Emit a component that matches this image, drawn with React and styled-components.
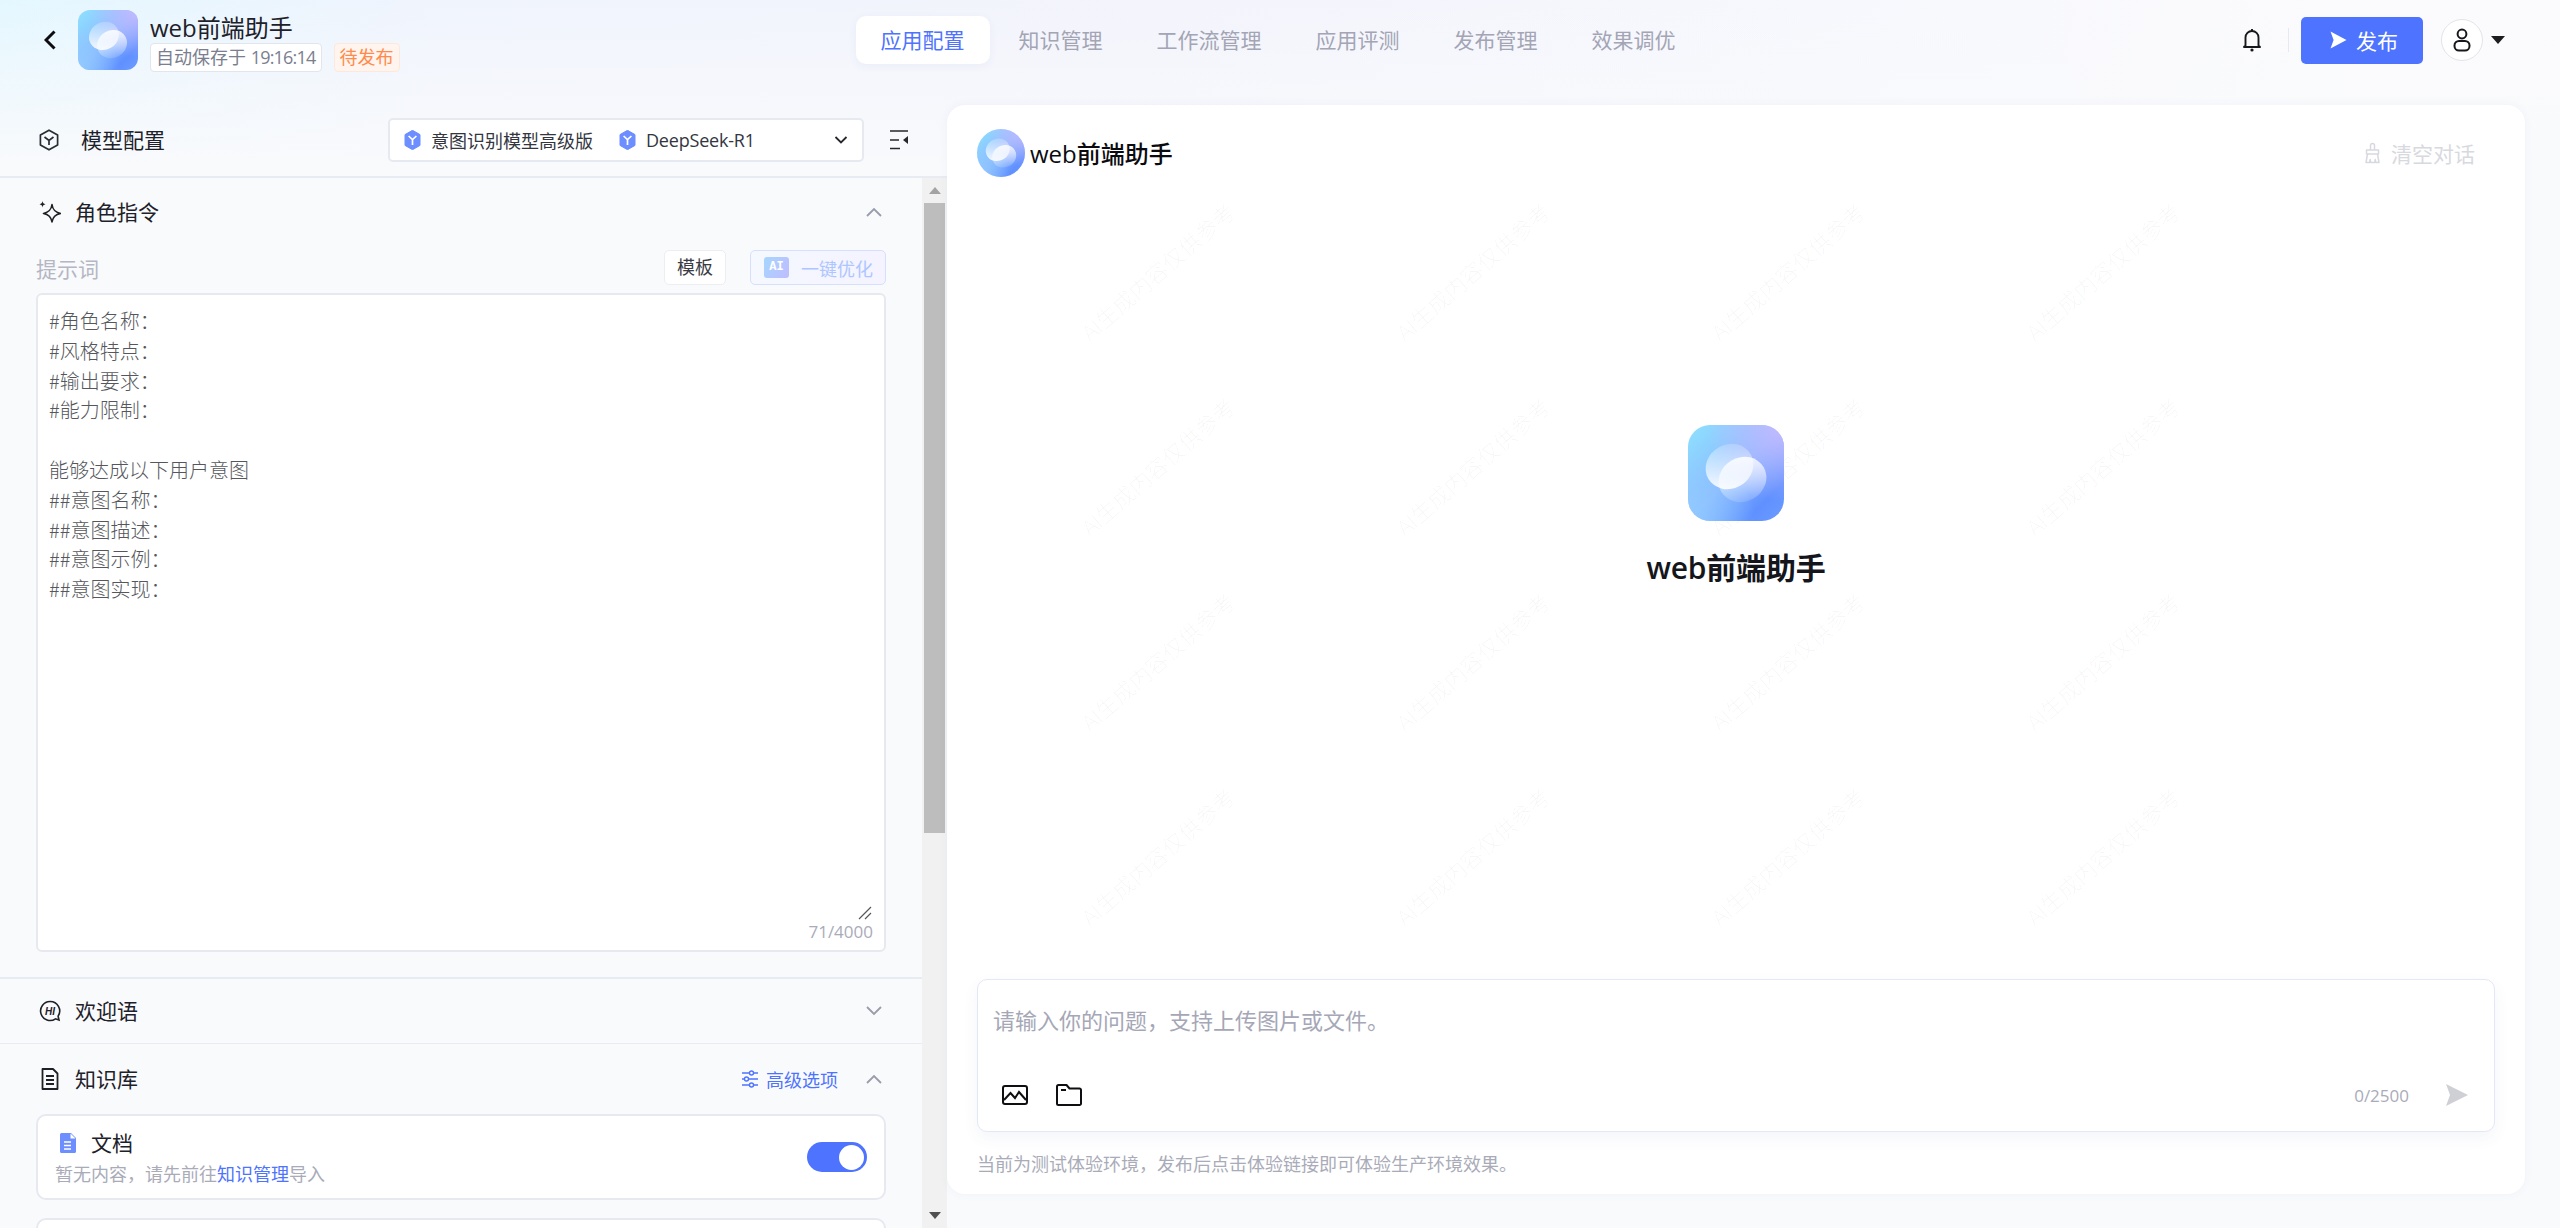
import React from "react";
import styled, { createGlobalStyle } from "styled-components";

const Global = createGlobalStyle`
  html, body { margin: 0; padding: 0; }
  body {
    font-family: "Open Sans", "Noto Sans CJK SC", sans-serif;
    color: #1d2129;
    background: #f9fafc;
  }
  * { box-sizing: border-box; }
`;

const Page = styled.div`
  width: 2560px;
  height: 1228px;
  overflow: hidden;
  display: flex;
  flex-direction: column;
  background:
    linear-gradient(to bottom, rgba(249, 250, 252, 0) 0, rgba(249, 250, 252, 0.55) 90px, #f9fafc 170px),
    linear-gradient(100deg, #e4f7ff 0%, #f0f4fd 16%, #f3f4fc 42%, #f7f8fd 66%, #fbfbfd 85%);
`;

const Header = styled.header`
  height: 105px;
  flex: none;
  display: flex;
  align-items: flex-start;
  padding: 0 55px 0 44px;
`;

const BackIcon = styled.svg`
  width: 12px;
  height: 20px;
  margin-top: 30px;
  flex: none;
`;

const Brand = styled.div`
  display: flex;
  align-items: flex-start;
  gap: 12px;
  margin-left: 22px;
  padding-top: 10px;
`;

const LogoSvg = styled.svg`
  display: block;
  flex: none;
  width: ${(p) => p.$size}px;
  height: ${(p) => p.$size}px;
  border-radius: ${(p) => p.$radius};
`;

const BrandText = styled.div`
  display: flex;
  flex-direction: column;
  margin-top: 3px;
`;

const AppName = styled.div`
  font-size: 24px;
  line-height: 30px;
  color: #1d2129;
  white-space: nowrap;
`;

const TagRow = styled.div`
  display: flex;
  gap: 12px;
`;

const Tag = styled.span`
  height: 29px;
  padding: 0 5px;
  font-size: 18px;
  line-height: 27px;
  border-radius: 4px;
  white-space: nowrap;
  border: 1px solid ${(p) => (p.$warn ? "#fde9dc" : "#e3e5ec")};
  background: ${(p) => (p.$warn ? "#fff5ee" : "#ffffff")};
  color: ${(p) => (p.$warn ? "#ff8a4c" : "#7b7e8f")};
`;

const TimeText = styled.span`
  letter-spacing: -0.8px;
`;

const Tabs = styled.nav`
  display: flex;
  gap: 4px;
  margin-left: 456px;
  margin-top: 16px;
`;

const Tab = styled.div`
  height: 48px;
  padding: 0 25px;
  font-size: 21px;
  line-height: 48px;
  border-radius: 10px;
  white-space: nowrap;
  color: ${(p) => (p.$active ? "#4d73ff" : "#a3a5b5")};
  background: ${(p) => (p.$active ? "#ffffff" : "transparent")};
  box-shadow: ${(p) => (p.$active ? "0 2px 8px rgba(70, 90, 160, 0.06)" : "none")};
`;

const Actions = styled.div`
  margin-left: auto;
  margin-top: 16px;
  height: 48px;
  display: flex;
  align-items: center;
`;

const BellIcon = styled.svg`
  width: 20px;
  height: 24px;
  flex: none;
`;

const VDivider = styled.span`
  width: 1px;
  height: 24px;
  background: #e8e9ef;
  margin: 0 12px 0 26px;
`;

const PublishButton = styled.button`
  width: 122px;
  height: 47px;
  border: 0;
  border-radius: 5px;
  background: #4d73ff;
  color: #fff;
  font: inherit;
  font-size: 21px;
  display: flex;
  align-items: center;
  padding-left: 29px;
  gap: 9px;
`;

const Glyph = styled.svg`
  width: ${(p) => p.$w}px;
  height: ${(p) => p.$h}px;
  flex: none;
`;

const Avatar = styled.div`
  width: 42px;
  height: 42px;
  margin-left: 18px;
  border-radius: 50%;
  background: #fff;
  border: 1px solid #e3e4ea;
  display: flex;
  align-items: center;
  justify-content: center;
`;

const Caret = styled.span`
  width: 0;
  height: 0;
  margin-left: 8px;
  border-left: 7px solid transparent;
  border-right: 7px solid transparent;
  border-top: 8px solid #1d1d1f;
`;

const Main = styled.main`
  flex: 1;
  min-height: 0;
  display: flex;
  align-items: flex-start;
`;

const LeftPanel = styled.section`
  width: 947px;
  height: 1123px;
  flex: none;
  display: flex;
  flex-direction: column;
`;

const ModelBar = styled.div`
  height: 73px;
  flex: none;
  display: flex;
  align-items: center;
  padding: 0 39px 2px 39px;
  border-bottom: 2px solid #e9ebf3;
`;

const BarTitle = styled.span`
  font-size: 21px;
  line-height: 30px;
  color: #1d2129;
  margin-left: 22px;
`;

const ModelSelect = styled.div`
  width: 476px;
  height: 44px;
  margin-left: auto;
  display: flex;
  align-items: center;
  background: #fff;
  border: 2px solid #e7e9f0;
  border-radius: 5px;
  padding: 0 14px;
  font-size: 18px;
  color: #33363f;
  white-space: nowrap;
`;

const ModelName = styled.span`
  margin-left: 10px;
  margin-right: ${(p) => p.$gap || 0}px;
  letter-spacing: ${(p) => (p.$gap ? "0" : "-0.2px")};
`;

const SelectChevron = styled.svg`
  width: 14px;
  height: 10px;
  margin-left: auto;
  flex: none;
`;

const CollapseIcon = styled.svg`
  width: 18px;
  height: 20px;
  margin-left: 26px;
  flex: none;
`;

const ScrollArea = styled.div`
  flex: 1;
  min-height: 0;
  display: flex;
`;

const Content = styled.div`
  flex: 1;
  min-width: 0;
  overflow: hidden;
`;

const ScrollTrack = styled.div`
  width: 25px;
  flex: none;
  display: flex;
  flex-direction: column;
  background: #f1f1f1;
`;

const ScrollBtn = styled.div`
  height: 25px;
  flex: none;
  display: flex;
  align-items: center;
  justify-content: center;
  margin-top: ${(p) => (p.$down ? "auto" : "0")};
`;

const Arrow = styled.span`
  width: 0;
  height: 0;
  border-left: 6px solid transparent;
  border-right: 6px solid transparent;
  ${(p) =>
    p.$down
      ? "border-top: 7px solid #505050;"
      : "border-bottom: 7px solid #a3a3a3;"}
`;

const Thumb = styled.div`
  height: 630px;
  margin: 0 2px;
  background: #bdbdbd;
`;

const SectionRow = styled.div`
  height: ${(p) => p.$h}px;
  display: flex;
  align-items: center;
  padding: 0 40px 0 39px;
  border-top: ${(p) => p.$top || "0 solid transparent"};
  border-bottom: ${(p) => p.$line || "0 solid transparent"};
`;

const IconBox = styled.svg`
  width: 22px;
  height: 22px;
  flex: none;
`;

const SectionTitle = styled.span`
  font-size: 21px;
  line-height: 30px;
  color: #1d2129;
  margin-left: 14px;
`;

const Chevron = styled.svg`
  width: 16px;
  height: 10px;
  flex: none;
  margin-left: ${(p) => p.$ml || "auto"};
`;

const AdvancedLink = styled.span`
  margin-left: auto;
  display: flex;
  align-items: center;
  gap: 8px;
  font-size: 18px;
  color: #4d73ff;
`;

const PromptBar = styled.div`
  height: 35px;
  margin: 4px 36px 0;
  display: flex;
  align-items: center;
  gap: 24px;
`;

const PromptLabel = styled.span`
  font-size: 21px;
  color: #b4b6c3;
  margin-right: auto;
`;

const TemplateBtn = styled.span`
  width: 62px;
  height: 35px;
  background: #fff;
  border: 1px solid #eceef3;
  border-radius: 5px;
  font-size: 18px;
  line-height: 33px;
  text-align: center;
  color: #3a3c45;
`;

const OptimizeBtn = styled.span`
  width: 136px;
  height: 35px;
  border: 1px solid #d6e0fc;
  border-radius: 5px;
  background: linear-gradient(90deg, #f5f8ff, #f4f3ff);
  display: flex;
  align-items: center;
  padding-left: 13px;
  gap: 12px;
  font-size: 18px;
  color: #aec6ff;
`;

const AiBadge = styled.span`
  width: 25px;
  height: 21px;
  border-radius: 3px;
  background: linear-gradient(120deg, #a5d6ff, #c0bcff);
  color: #fff;
  font-family: "Liberation Mono", monospace;
  font-weight: 700;
  font-size: 12px;
  line-height: 21px;
  text-align: center;
`;

const PromptBox = styled.div`
  position: relative;
  height: 659px;
  margin: 8px 36px 25px;
  background: #fff;
  border: 2px solid #e8e9f0;
  border-radius: 6px;
  padding: 11px 11px;
  font-family: "Noto Sans CJK SC", monospace;
  font-size: 20px;
  font-weight: 300;
  line-height: 29.8px;
  color: #55575c;
  white-space: pre;
`;

const ResizeGrip = styled.svg`
  position: absolute;
  right: 12px;
  bottom: 30px;
  width: 14px;
  height: 14px;
`;

const CharCount = styled.span`
  position: absolute;
  right: 11px;
  bottom: 8px;
  font-family: "Open Sans", sans-serif;
  font-size: 17px;
  font-weight: 400;
  line-height: 20px;
  color: #a9abb8;
`;

const KnowledgeCard = styled.div`
  height: ${(p) => p.$h}px;
  margin: 0 36px ${(p) => p.$mb}px;
  background: #fff;
  border: 2px solid #e8e9f0;
  border-radius: 10px;
  padding: 0 17px 0 17px;
  display: flex;
  align-items: center;
  justify-content: space-between;
`;

const CardText = styled.div`
  display: flex;
  flex-direction: column;
  gap: 4px;
`;

const CardHead = styled.div`
  display: flex;
  align-items: center;
  gap: 15px;
  padding-left: 5px;
  font-size: 21px;
  line-height: 30px;
  color: #1d2129;
`;

const CardHint = styled.div`
  font-size: 18px;
  line-height: 24px;
  color: #a9abb8;
`;

const HintLink = styled.span`
  color: #4d73ff;
`;

const Switch = styled.span`
  width: 60px;
  height: 30px;
  border-radius: 15px;
  background: #4d73ff;
  display: flex;
  align-items: center;
  justify-content: flex-end;
  padding-right: 3px;
`;

const Knob = styled.span`
  width: 25px;
  height: 25px;
  border-radius: 50%;
  background: #fff;
`;

const ChatCard = styled.section`
  position: relative;
  width: 1578px;
  height: 1089px;
  flex: none;
  background: #fff;
  border-radius: 18px;
  box-shadow: 0 0 10px rgba(60, 70, 130, 0.05);
  display: flex;
  flex-direction: column;
  overflow: hidden;
`;

const Watermarks = styled.div`
  position: absolute;
  left: 52px;
  top: 68px;
  display: grid;
  grid-template-columns: repeat(4, 315px);
  grid-auto-rows: 195px;
  pointer-events: none;
`;

const Watermark = styled.span`
  display: flex;
  align-items: center;
  justify-content: center;
  white-space: nowrap;
  font-size: 22px;
  font-weight: 300;
  color: rgba(20, 20, 40, 0.045);
  transform: rotate(-41deg);
`;

const ChatHeader = styled.div`
  position: relative;
  display: flex;
  align-items: center;
  padding: 24px 50px 0 30px;
`;

const ChatName = styled.span`
  font-size: 24px;
  font-weight: 500;
  color: #0b0b0f;
  margin: 0 0 2px 5px;
`;

const ClearBtn = styled.span`
  margin-left: auto;
  display: flex;
  align-items: center;
  gap: 10px;
  font-size: 21px;
  color: #d8d9e0;
`;

const Hero = styled.div`
  position: relative;
  margin-top: 248px;
  display: flex;
  flex-direction: column;
  align-items: center;
`;

const HeroName = styled.div`
  margin-top: 25px;
  font-size: 30px;
  line-height: 44px;
  font-weight: 600;
  letter-spacing: -0.2px;
  color: #14161c;
`;

const InputBox = styled.div`
  position: relative;
  margin: auto 30px 0;
  height: 153px;
  border: 1.5px solid #e3e8f6;
  border-radius: 10px;
  background: #fff;
  box-shadow: 0 6px 16px rgba(70, 90, 160, 0.06);
  padding: 25px 15px 16px;
  display: flex;
  flex-direction: column;
  justify-content: space-between;
`;

const Placeholder = styled.div`
  font-size: 22px;
  line-height: 30px;
  color: #a5a7b6;
`;

const InputTools = styled.div`
  height: 40px;
  display: flex;
  align-items: center;
  padding: 0 10px 0 9px;
`;

const ToolIcon = styled.svg`
  width: 26px;
  height: 22px;
  margin-right: 28px;
  flex: none;
`;

const Counter = styled.span`
  margin-left: auto;
  margin-right: 36px;
  font-size: 17px;
  color: #a9abb8;
`;

const Note = styled.div`
  position: relative;
  margin: 20px 30px 18px;
  font-size: 18px;
  line-height: 24px;
  color: #a9abb8;
`;

const Logo = ({ size, radius }) => (
  <LogoSvg $size={size} $radius={radius} viewBox="0 0 96 96" aria-hidden="true">
    <defs>
      <linearGradient id="lgBase" x1="0" y1="0" x2="1" y2="1">
        <stop offset="0" stopColor="#8fe2ff" />
        <stop offset="0.5" stopColor="#8ab9ff" />
        <stop offset="0.8" stopColor="#5f90ff" />
        <stop offset="1" stopColor="#6c9cff" />
      </linearGradient>
      <radialGradient id="lgTop" cx="1" cy="0" r="0.8">
        <stop offset="0" stopColor="#c8b9ff" stopOpacity="0.95" />
        <stop offset="1" stopColor="#c8b9ff" stopOpacity="0" />
      </radialGradient>
      <radialGradient id="lgBot" cx="0" cy="1" r="0.7">
        <stop offset="0" stopColor="#93ccff" stopOpacity="0.9" />
        <stop offset="1" stopColor="#93ccff" stopOpacity="0" />
      </radialGradient>
      <linearGradient id="lgE1" x1="0.9" y1="0" x2="0.2" y2="1">
        <stop offset="0" stopColor="#fff" stopOpacity="0.12" />
        <stop offset="1" stopColor="#fff" stopOpacity="0.95" />
      </linearGradient>
      <linearGradient id="lgE2" x1="0.8" y1="0" x2="0.3" y2="1">
        <stop offset="0" stopColor="#fff" stopOpacity="0.92" />
        <stop offset="1" stopColor="#fff" stopOpacity="0.12" />
      </linearGradient>
    </defs>
    <rect width="96" height="96" fill="url(#lgBase)" />
    <rect width="96" height="96" fill="url(#lgTop)" />
    <rect width="96" height="96" fill="url(#lgBot)" />
    <ellipse cx="41.5" cy="41.5" rx="24.5" ry="22" transform="rotate(-30 41.5 41.5)" fill="url(#lgE1)" />
    <ellipse cx="54.5" cy="54.5" rx="24.5" ry="22" transform="rotate(-30 54.5 54.5)" fill="url(#lgE2)" />
  </LogoSvg>
);

const HexFill = () => (
  <Glyph $w={17} $h={20} viewBox="0 0 17 20" aria-hidden="true">
    <path d="M8.5 0.3 16 4.6v10.8l-7.5 4.3L1 15.4V4.6z" fill="#6c8eff" stroke="#6c8eff" strokeLinejoin="round" />
    <path d="M4.6 6 8.5 9.6 12.4 6M8.5 9.6v5.4" fill="none" stroke="#fff" strokeWidth="1.7" />
  </Glyph>
);

const Up = () => (
  <Chevron viewBox="0 0 16 10" aria-hidden="true">
    <path d="M1 9 8 2l7 7" fill="none" stroke="#9a9cab" strokeWidth="1.8" />
  </Chevron>
);

const Down = () => (
  <Chevron viewBox="0 0 16 10" aria-hidden="true">
    <path d="M1 1l7 7 7-7" fill="none" stroke="#9a9cab" strokeWidth="1.8" />
  </Chevron>
);

const prompt = `#角色名称：
#风格特点：
#输出要求：
#能力限制：

能够达成以下用户意图
##意图名称：
##意图描述：
##意图示例：
##意图实现：`;

const tabs = ["应用配置", "知识管理", "工作流管理", "应用评测", "发布管理", "效果调优"];

export default function App() {
  return (
    <Page>
      <Global />
      <Header>
        <BackIcon viewBox="0 0 12 20" aria-hidden="true">
          <path d="M10.5 1.5 2 10l8.5 8.5" fill="none" stroke="#0d0d0f" strokeWidth="3" />
        </BackIcon>
        <Brand>
          <Logo size={60} radius="12px" />
          <BrandText>
            <AppName>web前端助手</AppName>
            <TagRow>
              <Tag>自动保存于 <TimeText>19:16:14</TimeText></Tag>
              <Tag $warn>待发布</Tag>
            </TagRow>
          </BrandText>
        </Brand>
        <Tabs>
          {tabs.map((t, i) => (
            <Tab key={t} $active={i === 0}>{t}</Tab>
          ))}
        </Tabs>
        <Actions>
          <BellIcon viewBox="0 0 20 24" aria-hidden="true">
            <path d="M3.5 17.5V9.5a6.5 6.5 0 0 1 13 0v8l1.5 1.5H2z" fill="none" stroke="#17181c" strokeWidth="1.9" strokeLinejoin="round" />
            <path d="M10 3V1" stroke="#17181c" strokeWidth="1.9" />
            <circle cx="10" cy="22" r="1.6" fill="#17181c" />
          </BellIcon>
          <VDivider />
          <PublishButton>
            <Glyph $w={17} $h={18} viewBox="0 0 17 18" aria-hidden="true">
              <path d="M0.5 0.5 16.5 9 0.5 17.5 3.6 9z" fill="#fff" />
            </Glyph>
            发布
          </PublishButton>
          <Avatar>
            <svg width="18" height="24" viewBox="0 0 18 24" aria-hidden="true">
              <circle cx="9" cy="6" r="4.4" fill="none" stroke="#17181c" strokeWidth="2" />
              <rect x="1.5" y="13" width="15" height="9.5" rx="4.5" fill="none" stroke="#17181c" strokeWidth="2" />
            </svg>
          </Avatar>
          <Caret />
        </Actions>
      </Header>
      <Main>
        <LeftPanel>
          <ModelBar>
            <Glyph $w={20} $h={22} viewBox="0 0 20 22" aria-hidden="true">
              <path d="M10 1.2 18.6 6v10L10 20.8 1.4 16V6z" fill="none" stroke="#2a2c33" strokeWidth="1.7" strokeLinejoin="round" />
              <path d="M5.5 8 10 11.5 14.5 8M10 11.5V16" fill="none" stroke="#2a2c33" strokeWidth="1.7" />
            </Glyph>
            <BarTitle>模型配置</BarTitle>
            <ModelSelect>
              <HexFill />
              <ModelName $gap={26}>意图识别模型高级版</ModelName>
              <HexFill />
              <ModelName>DeepSeek-R1</ModelName>
              <SelectChevron viewBox="0 0 14 10" aria-hidden="true">
                <path d="M1.5 2 7 7.5 12.5 2" fill="none" stroke="#26272d" strokeWidth="1.8" />
              </SelectChevron>
            </ModelSelect>
            <CollapseIcon viewBox="0 0 18 20" aria-hidden="true">
              <path d="M0 1h18M0 10h9M0 18.5h10" stroke="#26272d" strokeWidth="1.6" fill="none" />
              <path d="M13 10 18 6v8z" fill="#26272d" />
            </CollapseIcon>
          </ModelBar>
          <ScrollArea>
            <Content>
              <SectionRow $h={68}>
                <IconBox viewBox="0 0 22 22" aria-hidden="true">
                  <path d="M13 3.5c.8 5.5 3 7.8 8.5 9-5.5 1-7.7 3.3-8.500 8.500-.8-5.200-3-7.500-8.500-8.500 5.500-1.200 7.700-3.500 8.500-9z" fill="none" stroke="#1f2025" strokeWidth="1.6" strokeLinejoin="round" />
                  <path d="M3.5 0c.3 2 1 2.8 3 3.200-2 .4-2.700 1.200-3 3.200-.3-2-1-2.800-3-3.200 2-.4 2.700-1.200 3-3.200z" fill="#1f2025" />
                </IconBox>
                <SectionTitle>角色指令</SectionTitle>
                <Up />
              </SectionRow>
              <PromptBar>
                <PromptLabel>提示词</PromptLabel>
                <TemplateBtn>模板</TemplateBtn>
                <OptimizeBtn>
                  <AiBadge>AI</AiBadge>
                  一键优化
                </OptimizeBtn>
              </PromptBar>
              <PromptBox>
                {prompt}
                <ResizeGrip viewBox="0 0 14 14" aria-hidden="true">
                  <path d="M13 1 1 13M13 7l-6 6" stroke="#55575c" strokeWidth="1.2" fill="none" />
                </ResizeGrip>
                <CharCount>71/4000</CharCount>
              </PromptBox>
              <SectionRow $h={67} $top="2px solid #e9ebf3" $line="1px solid #e9ebf3">
                <IconBox viewBox="0 0 22 22" aria-hidden="true">
                  <path d="M11 1.5a9.5 9.5 0 1 0 5.5 17.3l3.500 1.200-.9-3.800A9.500 9.500 0 0 0 11 1.500z" fill="none" stroke="#1f2025" strokeWidth="1.6" />
                  <text x="11" y="14.5" textAnchor="middle" fontSize="10" fontWeight="700" fontStyle="italic" fill="#1f2025" fontFamily="Liberation Sans, sans-serif">HI</text>
                </IconBox>
                <SectionTitle>欢迎语</SectionTitle>
                <Down />
              </SectionRow>
              <SectionRow $h={70}>
                <IconBox viewBox="0 0 22 22" aria-hidden="true">
                  <path d="M3.5 1h10.500l4.500 4.500V21h-15z" fill="none" stroke="#1f2025" strokeWidth="1.8" strokeLinejoin="round" />
                  <path d="M7 8h8M7 12h8M7 16h8" stroke="#1f2025" strokeWidth="1.8" />
                </IconBox>
                <SectionTitle>知识库</SectionTitle>
                <AdvancedLink>
                  <Glyph $w={16} $h={18} viewBox="0 0 16 18" aria-hidden="true">
                    <path d="M0 3h7M12 3h4M0 9h2M7 9h9M0 15h7M12 15h4" stroke="#4d73ff" strokeWidth="1.5" fill="none" />
                    <circle cx="9.5" cy="3" r="2" fill="none" stroke="#4d73ff" strokeWidth="1.4" />
                    <circle cx="4.5" cy="9" r="2" fill="none" stroke="#4d73ff" strokeWidth="1.4" />
                    <circle cx="9.5" cy="15" r="2" fill="none" stroke="#4d73ff" strokeWidth="1.4" />
                  </Glyph>
                  高级选项
                </AdvancedLink>
                <Chevron $ml="28px" viewBox="0 0 16 10" aria-hidden="true">
                  <path d="M1 9 8 2l7 7" fill="none" stroke="#9a9cab" strokeWidth="1.8" />
                </Chevron>
              </SectionRow>
              <KnowledgeCard $h={86} $mb={18}>
                <CardText>
                  <CardHead>
                    <Glyph $w={16} $h={20} viewBox="0 0 16 20" aria-hidden="true">
                      <path d="M1.5 0H11l5 5v13.500a1.500 1.500 0 0 1-1.500 1.500h-13A1.500 1.500 0 0 1 0 18.500v-17A1.500 1.500 0 0 1 1.500 0z" fill="#6c8eff" />
                      <path d="M10.5 0.5V5.500H15.500z" fill="#fff" />
                      <path d="M4 9h7M4 12.5h7M4 16h7" stroke="#fff" strokeWidth="1.6" />
                    </Glyph>
                    文档
                  </CardHead>
                  <CardHint>
                    暂无内容，请先前往<HintLink>知识管理</HintLink>导入
                  </CardHint>
                </CardText>
                <Switch><Knob /></Switch>
              </KnowledgeCard>
              <KnowledgeCard $h={86} $mb={0} />
            </Content>
            <ScrollTrack>
              <ScrollBtn><Arrow /></ScrollBtn>
              <Thumb />
              <ScrollBtn $down><Arrow $down /></ScrollBtn>
            </ScrollTrack>
          </ScrollArea>
        </LeftPanel>
        <ChatCard>
          <Watermarks aria-hidden="true">
            {Array.from({ length: 16 }, (_, i) => (
              <Watermark key={i}>AI生成内容仅供参考</Watermark>
            ))}
          </Watermarks>
          <ChatHeader>
            <Logo size={48} radius="50%" />
            <ChatName>web前端助手</ChatName>
            <ClearBtn>
              <Glyph $w={17} $h={22} viewBox="0 0 17 22" aria-hidden="true">
                <path d="M6.5 8V3.500a2 2 0 0 1 4 0V8M2.500 8h12v4h-12zM3.500 12 2 20.500h3.500l.7-3 .5 3h4l.5-3 .7 3H15L13.500 12" fill="none" stroke="#d8d9e0" strokeWidth="1.5" strokeLinejoin="round" />
              </Glyph>
              清空对话
            </ClearBtn>
          </ChatHeader>
          <Hero>
            <Logo size={96} radius="22px" />
            <HeroName>web前端助手</HeroName>
          </Hero>
          <InputBox>
            <Placeholder>请输入你的问题，支持上传图片或文件。</Placeholder>
            <InputTools>
              <ToolIcon viewBox="0 0 26 22" aria-hidden="true">
                <rect x="1" y="2" width="24" height="18" rx="2" fill="none" stroke="#0f0f12" strokeWidth="2" />
                <path d="M2 16l6.500-7 4.500 5 4-6 7 8" fill="none" stroke="#0f0f12" strokeWidth="2" />
              </ToolIcon>
              <ToolIcon viewBox="0 0 26 22" aria-hidden="true">
                <path d="M2.5 1h8l3 3.500h10a1.500 1.500 0 0 1 1.500 1.500v13.500a1.500 1.500 0 0 1-1.500 1.500h-21A1.500 1.500 0 0 1 1 19.500v-17A1.500 1.500 0 0 1 2.500 1z" fill="none" stroke="#0f0f12" strokeWidth="2" strokeLinejoin="round" />
                <path d="M5 6h5" stroke="#0f0f12" strokeWidth="2" />
              </ToolIcon>
              <Counter>0/2500</Counter>
              <Glyph $w={24} $h={24} viewBox="0 0 24 24" aria-hidden="true">
                <path d="M1 1 23 12 1 23 5 12z" fill="#cfd0d6" />
              </Glyph>
            </InputTools>
          </InputBox>
          <Note>当前为测试体验环境，发布后点击体验链接即可体验生产环境效果。</Note>
        </ChatCard>
      </Main>
    </Page>
  );
}
